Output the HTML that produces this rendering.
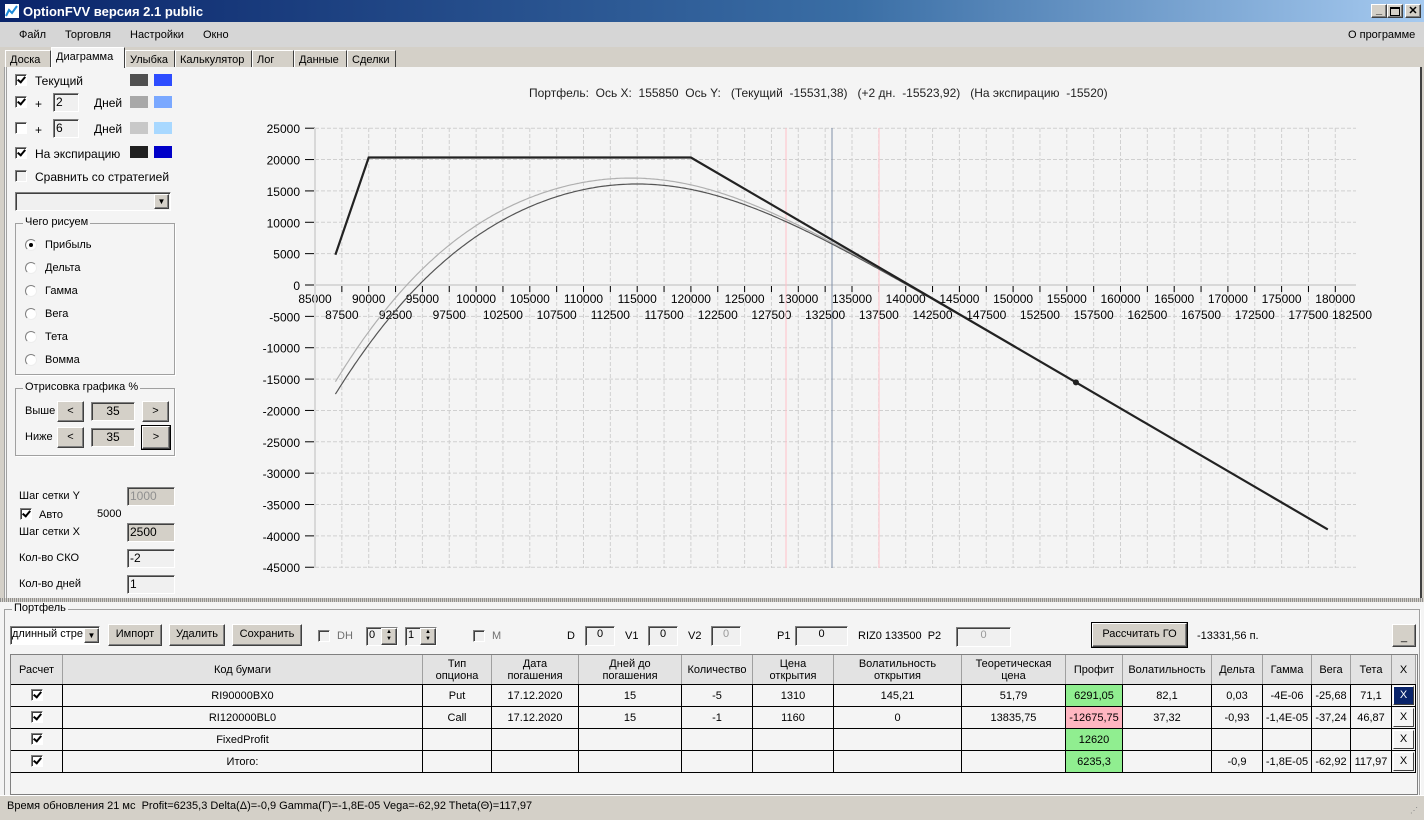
<!DOCTYPE html>
<html><head><meta charset="utf-8"><style>
*{box-sizing:border-box;margin:0;padding:0}
body{width:1424px;height:820px;overflow:hidden;background:#d4d0c8;font-family:"Liberation Sans",sans-serif;font-size:11px;color:#000;position:relative}
.a{position:absolute;white-space:nowrap}
.cb{position:absolute;width:12px;height:12px;border:1px solid #808080;border-right-color:#fff;border-bottom-color:#fff;background:#fff;box-shadow:inset 1px 1px 0 #404040}
.cb.ck::after{content:"";position:absolute;left:3px;top:0px;width:3px;height:6px;border:solid #000;border-width:0 2px 2px 0;transform:rotate(40deg)}
.cb.dis{background:#f0f0f0}
.tb{position:absolute;background:#f0f0f0;border:1px solid #808080;border-right-color:#fff;border-bottom-color:#fff;box-shadow:inset 1px 1px 0 #404040;padding:1px 2px;font-size:12px}
.btn{position:absolute;background:#d4d0c8;border:1px solid #fff;border-right-color:#404040;border-bottom-color:#404040;box-shadow:inset -1px -1px 0 #808080;text-align:center;font-size:11px}
.sw{position:absolute;width:18px;height:12px}
.grp{position:absolute;border:1px solid #a0a0a0;box-shadow:1px 1px 0 #fff}
.grp>span{position:absolute;top:-8px;left:7px;background:#f4f4f4;padding:0 2px;font-size:11px}
.rd{position:absolute;width:12px;height:12px;border-radius:50%;background:#fff;border:1px solid #808080;border-right-color:#eee;border-bottom-color:#eee}
.tab{position:absolute;top:50px;height:17px;border:1px solid #fff;border-right-color:#404040;border-bottom:none;font-size:11px;padding:3px 4px 0;background:#d4d0c8}
table{position:absolute;left:10px;top:654px;border-collapse:collapse;font-size:11px;table-layout:fixed;background:#f4f4f4}
td{border:1px solid #000;text-align:center;height:22px;padding:0;overflow:hidden;position:relative}
tr.h td{background:#e3e3e3;border-color:#a0a0a0;border-bottom-color:#000;height:30px;line-height:12px}
.xb{display:block;margin:0 auto;width:21px;height:19px;border:1px solid #fff;border-right-color:#404040;border-bottom-color:#404040;background:#f4f4f4;line-height:17px}
td .cb{left:20px;top:4px}
</style></head><body>
<div class="a" style="left:0;top:0;width:1424px;height:22px;background:linear-gradient(90deg,#0a246a,#3a6ea5 60%,#a6caf0)"></div>
<div class="a" style="left:4px;top:3px;width:16px;height:16px;background:#fff;border:1px solid #0a246a"><svg width="14" height="14"><polyline points="1,12 4,6 7,9 12,2" fill="none" stroke="#1c8ad8" stroke-width="2"/></svg></div>
<div class="a" style="left:23px;top:4px;color:#fff;font-weight:bold;font-size:13px">OptionFVV версия 2.1 public</div>
<div class="btn" style="left:1371px;top:4px;width:16px;height:14px;line-height:10px;font-weight:bold">_</div>
<div class="btn" style="left:1387px;top:4px;width:16px;height:14px"><div style="margin:2px auto;width:10px;height:9px;border:1px solid #000;border-top-width:2px"></div></div>
<div class="btn" style="left:1405px;top:4px;width:16px;height:14px;font-weight:bold;line-height:12px">✕</div>
<div class="a" style="left:0;top:22px;width:1424px;height:25px;background:#d6d6d6"></div>
<div class="a" style="left:19px;top:29px;font-size:11px">Файл</div>
<div class="a" style="left:65px;top:29px">Торговля</div>
<div class="a" style="left:130px;top:29px">Настройки</div>
<div class="a" style="left:203px;top:29px">Окно</div>
<div class="a" style="left:1348px;top:29px">О программе</div>
<div class="tab" style="left:5px;width:46px">Доска</div>
<div class="tab" style="left:125px;width:50px">Улыбка</div>
<div class="tab" style="left:175px;width:77px">Калькулятор</div>
<div class="tab" style="left:252px;width:42px">Лог</div>
<div class="tab" style="left:294px;width:53px">Данные</div>
<div class="tab" style="left:347px;width:49px">Сделки</div>
<div class="a" style="left:4px;top:67px;width:1418px;height:532px;background:#f4f4f4;border-left:3px double #a0a0a0;border-right:2px solid #404040"></div>
<div class="tab" style="left:51px;top:47px;width:74px;height:21px;background:#f4f4f4;z-index:2">Диаграмма</div>
<div class="cb ck" style="left:15px;top:74px"></div><div class="a" style="left:35px;top:74px;font-size:12px">Текущий</div>
<div class="sw" style="left:130px;top:74px;background:#505050"></div><div class="sw" style="left:154px;top:74px;background:#2d4dff"></div>
<div class="cb ck" style="left:15px;top:96px"></div><div class="a" style="left:35px;top:97px;font-size:12px">+</div>
<div class="tb" style="left:53px;top:93px;width:26px;height:19px">2</div><div class="a" style="left:94px;top:96px;font-size:12px">Дней</div>
<div class="sw" style="left:130px;top:96px;background:#a8a8a8"></div><div class="sw" style="left:154px;top:96px;background:#7aa8ff"></div>
<div class="cb" style="left:15px;top:122px"></div><div class="a" style="left:35px;top:123px;font-size:12px">+</div>
<div class="tb" style="left:53px;top:119px;width:26px;height:19px">6</div><div class="a" style="left:94px;top:122px;font-size:12px">Дней</div>
<div class="sw" style="left:130px;top:122px;background:#c8c8c8"></div><div class="sw" style="left:154px;top:122px;background:#a8d8ff"></div>
<div class="cb ck" style="left:15px;top:147px"></div><div class="a" style="left:35px;top:147px;font-size:12px">На экспирацию</div>
<div class="sw" style="left:130px;top:146px;background:#202020"></div><div class="sw" style="left:154px;top:146px;background:#0000c8"></div>
<div class="cb dis" style="left:15px;top:170px"></div><div class="a" style="left:35px;top:170px;font-size:12px">Сравнить со стратегией</div>
<div class="tb" style="left:15px;top:192px;width:156px;height:19px"></div>
<div class="btn" style="left:154px;top:194px;width:15px;height:15px;font-size:8px;line-height:13px">▼</div>
<div class="grp" style="left:15px;top:223px;width:160px;height:152px"><span>Чего рисуем</span></div>
<div class="rd" style="left:25px;top:239px"><div style="width:4px;height:4px;background:#000;border-radius:50%;margin:3px"></div></div><div class="a" style="left:45px;top:239px;font-size:11px">Прибыль</div>
<div class="rd" style="left:25px;top:262px"></div><div class="a" style="left:45px;top:262px">Дельта</div>
<div class="rd" style="left:25px;top:285px"></div><div class="a" style="left:45px;top:285px">Гамма</div>
<div class="rd" style="left:25px;top:308px"></div><div class="a" style="left:45px;top:308px">Вега</div>
<div class="rd" style="left:25px;top:331px"></div><div class="a" style="left:45px;top:331px">Тета</div>
<div class="rd" style="left:25px;top:354px"></div><div class="a" style="left:45px;top:354px">Вомма</div>
<div class="grp" style="left:15px;top:388px;width:160px;height:68px"><span>Отрисовка графика %</span></div>
<div class="a" style="left:25px;top:405px">Выше</div>
<div class="btn" style="left:57px;top:401px;width:27px;height:21px;line-height:18px">&lt;</div>
<div class="tb" style="left:91px;top:402px;width:44px;height:19px;background:#d4d0c8;text-align:center">35</div>
<div class="btn" style="left:142px;top:401px;width:27px;height:21px;line-height:18px">&gt;</div>
<div class="a" style="left:25px;top:431px">Ниже</div>
<div class="btn" style="left:57px;top:427px;width:27px;height:21px;line-height:18px">&lt;</div>
<div class="tb" style="left:91px;top:428px;width:44px;height:19px;background:#d4d0c8;text-align:center">35</div>
<div class="btn" style="left:142px;top:426px;width:28px;height:23px;line-height:20px;outline:1px solid #000">&gt;</div>
<div class="a" style="left:19px;top:490px">Шаг сетки Y</div>
<div class="tb" style="left:127px;top:487px;width:48px;height:19px;background:#d4d0c8;color:#909090">1000</div>
<div class="cb ck" style="left:20px;top:508px"></div><div class="a" style="left:39px;top:509px">Авто</div><div class="a" style="left:97px;top:508px">5000</div>
<div class="a" style="left:19px;top:526px">Шаг сетки X</div>
<div class="tb" style="left:127px;top:523px;width:48px;height:19px;background:#d4d0c8">2500</div>
<div class="a" style="left:19px;top:552px">Кол-во СКО</div>
<div class="tb" style="left:127px;top:549px;width:48px;height:19px">-2</div>
<div class="a" style="left:19px;top:578px">Кол-во дней</div>
<div class="tb" style="left:127px;top:575px;width:48px;height:19px">1</div>
<div class="a" style="left:529px;top:86px;font-size:12px;color:#222">Портфель:&nbsp; Ось X:&nbsp; 155850&nbsp; Ось Y:&nbsp;&nbsp; (Текущий&nbsp; -15531,38)&nbsp;&nbsp; (+2 дн.&nbsp; -15523,92)&nbsp;&nbsp; (На экспирацию&nbsp; -15520)</div>
<svg id="ch" class="a" style="left:0;top:0" width="1424" height="600" font-family="Liberation Sans, sans-serif" font-size="12"></svg>
<div class="a" style="left:0;top:598px;width:1424px;height:4px;background:repeating-linear-gradient(90deg,#909090 0 1px,#d4d0c8 1px 2px)"></div>
<div class="a" style="left:0;top:602px;width:1424px;height:193px;background:#f4f4f4"></div>
<div class="grp" style="left:4px;top:609px;width:1416px;height:190px;border-bottom:none"><span>Портфель</span></div>
<div class="tb" style="left:10px;top:626px;width:90px;height:19px;background:#fff;font-size:11px;padding-left:1px">длинный стре</div>
<div class="btn" style="left:84px;top:628px;width:15px;height:15px;font-size:8px;line-height:13px">▼</div>
<div class="btn" style="left:108px;top:624px;width:54px;height:22px;line-height:19px">Импорт</div>
<div class="btn" style="left:169px;top:624px;width:56px;height:22px;line-height:19px">Удалить</div>
<div class="btn" style="left:232px;top:624px;width:70px;height:22px;line-height:19px">Сохранить</div>
<div class="cb dis" style="left:318px;top:630px"></div><div class="a" style="left:337px;top:630px;color:#707070">DH</div>
<div class="tb" style="left:366px;top:627px;width:32px;height:19px;font-size:11px">0</div><div class="btn" style="left:381px;top:628px;width:16px;height:17px;font-size:6px;line-height:7px">▲<br>▼</div>
<div class="tb" style="left:405px;top:627px;width:32px;height:19px;font-size:11px">1</div><div class="btn" style="left:420px;top:628px;width:16px;height:17px;font-size:6px;line-height:7px">▲<br>▼</div>
<div class="cb dis" style="left:473px;top:630px"></div><div class="a" style="left:492px;top:630px;color:#707070">M</div>
<div class="a" style="left:567px;top:630px">D</div><div class="tb" style="left:585px;top:626px;width:30px;height:20px;text-align:center;font-size:11px">0</div>
<div class="a" style="left:625px;top:630px">V1</div><div class="tb" style="left:648px;top:626px;width:30px;height:20px;text-align:center;font-size:11px">0</div>
<div class="a" style="left:688px;top:630px">V2</div><div class="tb" style="left:711px;top:626px;width:30px;height:20px;text-align:center;font-size:11px;color:#999">0</div>
<div class="a" style="left:777px;top:630px">P1</div><div class="tb" style="left:795px;top:626px;width:53px;height:20px;text-align:center;font-size:11px">0</div>
<div class="a" style="left:858px;top:630px">RIZ0 133500&nbsp; P2</div><div class="tb" style="left:956px;top:627px;width:55px;height:20px;text-align:center;font-size:11px;color:#999">0</div>
<div class="btn" style="left:1092px;top:623px;width:95px;height:24px;line-height:20px;outline:1px solid #000">Рассчитать ГО</div>
<div class="a" style="left:1197px;top:630px">-13331,56 п.</div>
<div class="btn" style="left:1392px;top:624px;width:24px;height:23px;line-height:24px">_</div>
<table>
<colgroup><col style="width:52px"><col style="width:360px"><col style="width:69px"><col style="width:87px"><col style="width:103px"><col style="width:71px"><col style="width:81px"><col style="width:128px"><col style="width:104px"><col style="width:57px"><col style="width:89px"><col style="width:51px"><col style="width:49px"><col style="width:39px"><col style="width:41px"><col style="width:24px"></colgroup>
<tr class="h"><td>Расчет</td><td>Код бумаги</td><td>Тип<br>опциона</td><td>Дата<br>погашения</td><td>Дней до<br>погашения</td><td>Количество</td><td>Цена<br>открытия</td><td>Волатильность<br>открытия</td><td>Теоретическая<br>цена</td><td>Профит</td><td>Волатильность</td><td>Дельта</td><td>Гамма</td><td>Вега</td><td>Тета</td><td>X</td></tr>
<tr><td><span class="cb ck"></span></td><td>RI90000BX0</td><td>Put</td><td>17.12.2020</td><td>15</td><td>-5</td><td>1310</td><td>145,21</td><td>51,79</td><td style="background:#90ee90">6291,05</td><td>82,1</td><td>0,03</td><td>-4E-06</td><td>-25,68</td><td>71,1</td><td><span class="xb" style="background:#0a246a;color:#fff">X</span></td></tr>
<tr><td><span class="cb ck"></span></td><td>RI120000BL0</td><td>Call</td><td>17.12.2020</td><td>15</td><td>-1</td><td>1160</td><td>0</td><td>13835,75</td><td style="background:#ffb6c1">-12675,75</td><td>37,32</td><td>-0,93</td><td>-1,4E-05</td><td>-37,24</td><td>46,87</td><td><span class="xb">X</span></td></tr>
<tr><td><span class="cb ck"></span></td><td>FixedProfit</td><td></td><td></td><td></td><td></td><td></td><td></td><td></td><td style="background:#90ee90">12620</td><td></td><td></td><td></td><td></td><td></td><td><span class="xb">X</span></td></tr>
<tr><td><span class="cb ck"></span></td><td>Итого:</td><td></td><td></td><td></td><td></td><td></td><td></td><td></td><td style="background:#90ee90">6235,3</td><td></td><td>-0,9</td><td>-1,8E-05</td><td>-62,92</td><td>117,97</td><td><span class="xb">X</span></td></tr>
</table>
<div class="a" style="left:10px;top:654px;width:1408px;height:141px;border:1px solid #808080;pointer-events:none"></div>
<div class="a" style="left:0;top:795px;width:1424px;height:25px;background:#d4d0c8;border-top:1px solid #fff"></div>
<div class="a" style="left:7px;top:800px;font-size:11px">Время обновления 21 мс&nbsp; Profit=6235,3 Delta(Δ)=-0,9 Gamma(Г)=-1,8E-05 Vega=-62,92 Theta(Θ)=117,97</div>
<div class="a" style="left:1410px;top:806px;font-size:8px;color:#808080">⋰</div>
<script>
var s=document.getElementById('ch'),h='';
function X(p){return 315+(p-85000)*0.01074}
function Y(v){return 285-v*31.36/5000}
for(var v=25000;v>=-45000;v-=5000){var y=Y(v);h+='<line x1="315" x2="1356" y1="'+y+'" y2="'+y+'" stroke="#d0d0d0" stroke-dasharray="4,2"/><line x1="305" x2="315" y1="'+y+'" y2="'+y+'" stroke="#000"/><text x="300" y="'+(y+5)+'" text-anchor="end">'+v+'</text>';}
for(var p=85000;p<=182500;p+=2500){var x=X(p);if(x<=1357){h+='<line x1="'+x+'" x2="'+x+'" y1="128" y2="568" stroke="#d0d0d0" stroke-dasharray="4,2"/>';h+='<line x1="'+x+'" x2="'+x+'" y1="285" y2="292" stroke="#000"/>';}h+='<text x="'+Math.min(x,1352)+'" y="'+(p%5000?319:303)+'" text-anchor="middle">'+p+'</text>';}
h+='<line x1="315" x2="1356" y1="285" y2="285" stroke="#d8d8d8" stroke-width="2"/><line x1="315" x2="315" y1="128" y2="568" stroke="#d8d8d8" stroke-width="2"/>';
h+='<line x1="786" x2="786" y1="128" y2="568" stroke="#ffc0c8"/><line x1="879" x2="879" y1="128" y2="568" stroke="#ffc0c8"/><line x1="832" x2="832" y1="128" y2="568" stroke="#8090a8"/>';
function N(x){var t=1/(1+0.2316419*Math.abs(x)),d=0.3989423*Math.exp(-x*x/2),p=d*t*(0.3193815+t*(-0.3565638+t*(1.781478+t*(-1.821256+t*1.330274))));return x>0?1-p:p}
function bs(S,K,v,T,c){var sd=v*Math.sqrt(T),d1=(Math.log(S/K)+sd*sd/2)/sd,d2=d1-sd;return c?S*N(d1)-K*N(d2):K*N(-d2)-S*N(-d1)}
function val(S,T){return 12620+6550+1160-5*bs(S,90000,0.821,T,0)-bs(S,120000,0.3732,T,1)}
function path(T,col,w){var d='';for(var p=86900;p<=179300;p+=200){d+=(d?'L':'M')+X(p).toFixed(1)+','+Y(val(p,T)).toFixed(1);}return '<path d="'+d+'" fill="none" stroke="'+col+'" stroke-width="'+w+'"/>'}
h+=path(13/365,'#b0b0b0',1.2)+path(15/365,'#555',1.2);
function ex(p){return 20330-5*Math.max(0,90000-p)-Math.max(0,p-120000)}
h+='<polyline points="'+[86900,90000,120000,179300].map(function(p){return X(p)+','+Y(ex(p))}).join(' ')+'" fill="none" stroke="#222" stroke-width="2.2"/>';
h+='<circle cx="'+X(155850)+'" cy="'+Y(-15520)+'" r="3" fill="#222"/>';
s.innerHTML=h;
</script>
</body></html>
